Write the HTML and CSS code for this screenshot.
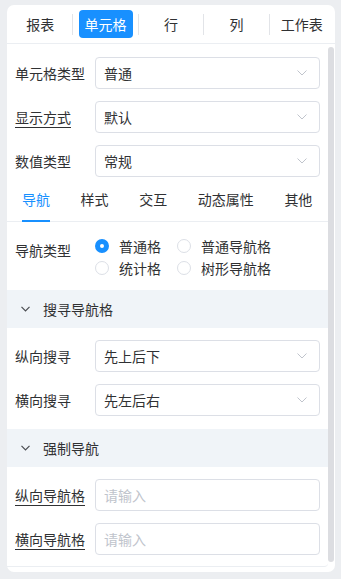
FILE: index.html
```html
<!DOCTYPE html>
<html lang="zh-CN">
<head>
    <meta charset="UTF-8">
    <meta name="viewport" content="width=device-width, initial-scale=1.0">
    <title>单元格属性</title>
    <link rel="stylesheet" href="styles.css">
</head>
<body>
    <div class="panel">
        <!-- 顶部分类 -->
        <div class="top-tabs">
            <div class="top-tab"><span>报表</span></div>
            <div class="top-tab"><span class="active">单元格</span></div>
            <div class="top-tab"><span>行</span></div>
            <div class="top-tab"><span>列</span></div>
            <div class="top-tab"><span>工作表</span></div>
        </div>

        <div class="panel-body">
            <div class="scroll">
                <div class="basic">
                    <div class="row">
                        <span class="label">单元格类型</span>
                        <div class="select">
                            <span>普通</span>
                            <svg class="arrow" width="10" height="6" viewBox="0 0 10 6"><path d="M0.5 0.5 L5 5 L9.5 0.5" /></svg>
                        </div>
                    </div>
                    <div class="row">
                        <span class="label"><u>显示方式</u></span>
                        <div class="select">
                            <span>默认</span>
                            <svg class="arrow" width="10" height="6" viewBox="0 0 10 6"><path d="M0.5 0.5 L5 5 L9.5 0.5" /></svg>
                        </div>
                    </div>
                    <div class="row">
                        <span class="label">数值类型</span>
                        <div class="select">
                            <span>常规</span>
                            <svg class="arrow" width="10" height="6" viewBox="0 0 10 6"><path d="M0.5 0.5 L5 5 L9.5 0.5" /></svg>
                        </div>
                    </div>
                </div>

                <!-- 属性分页 -->
                <div class="sub-tabs">
                    <span class="sub-tab active">导航</span>
                    <span class="sub-tab">样式</span>
                    <span class="sub-tab">交互</span>
                    <span class="sub-tab">动态属性</span>
                    <span class="sub-tab">其他</span>
                </div>

                <div class="nav-type">
                    <span class="label">导航类型</span>
                    <div class="radios">
                        <span class="radio checked"><i></i>普通格</span>
                        <span class="radio"><i></i>普通导航格</span>
                        <span class="radio"><i></i>统计格</span>
                        <span class="radio"><i></i>树形导航格</span>
                    </div>
                </div>

                <div class="section-head">
                    <svg class="fold" width="9" height="6" viewBox="0 0 9 6"><path d="M0.5 0.8 L4.5 4.8 L8.5 0.8" /></svg>
                    <span>搜寻导航格</span>
                </div>
                <div class="section">
                    <div class="row">
                        <span class="label">纵向搜寻</span>
                        <div class="select">
                            <span>先上后下</span>
                            <svg class="arrow" width="10" height="6" viewBox="0 0 10 6"><path d="M0.5 0.5 L5 5 L9.5 0.5" /></svg>
                        </div>
                    </div>
                    <div class="row">
                        <span class="label">横向搜寻</span>
                        <div class="select">
                            <span>先左后右</span>
                            <svg class="arrow" width="10" height="6" viewBox="0 0 10 6"><path d="M0.5 0.5 L5 5 L9.5 0.5" /></svg>
                        </div>
                    </div>
                </div>

                <div class="section-head">
                    <svg class="fold" width="9" height="6" viewBox="0 0 9 6"><path d="M0.5 0.8 L4.5 4.8 L8.5 0.8" /></svg>
                    <span>强制导航</span>
                </div>
                <div class="section last">
                    <div class="row">
                        <span class="label"><u>纵向导航格</u></span>
                        <input class="input" type="text" placeholder="请输入">
                    </div>
                    <div class="row">
                        <span class="label"><u>横向导航格</u></span>
                        <input class="input" type="text" placeholder="请输入">
                    </div>
                </div>
            </div>
            <div class="scrollbar"></div>
        </div>
    </div>
</body>
</html>
```

FILE: styles.css
```css
body {
    margin: 0;
    padding: 0;
    background-color: #eceef1;
    font-family: "Noto Sans CJK SC", "Noto Sans", sans-serif;
    font-size: 14px;
    color: #303133;
}

/* 面板 */
.panel {
    margin: 5px 6px 7px 7px;
    height: 562px;
    padding-bottom: 5px;
    background-color: #fff;
    border-radius: 7px;
    display: flex;
    flex-direction: column;
}

/* 顶部分类 */
.top-tabs {
    height: 38px;
    display: flex;
    align-items: center;
    padding: 0 1px;
    border-bottom: 1px solid #ebeef2;
}

.top-tab {
    flex: 1;
    height: 21px;
    display: flex;
    align-items: center;
    justify-content: center;
}

.top-tab + .top-tab {
    border-left: 1px solid #e2e4e8;
}

.top-tab span {
    line-height: 28px;
    padding: 0 5px;
    border-radius: 4px;
    white-space: nowrap;
}

.top-tab span.active {
    background-color: #1890ff;
    color: #fff;
    padding: 0 6px;
}

.panel-body {
    flex: 1;
    display: flex;
}

.scroll {
    flex: 1;
    border-bottom: 1px solid #ebeef2;
    border-bottom-right-radius: 4px;
}

.scrollbar {
    width: 6px;
    margin: 3px 1px 5px 0;
    background-color: #dcdde1;
    border-radius: 3px;
}

/* 表单行 */
.basic {
    padding: 13px 8px 0;
}

.row {
    display: flex;
    align-items: center;
    height: 32px;
}

.row + .row {
    margin-top: 12px;
}

.label {
    width: 80px;
    flex-shrink: 0;
    line-height: 32px;
    white-space: nowrap;
}

.label u {
    text-decoration-thickness: 1px;
    text-underline-offset: 4px;
}

.select,
.input {
    flex: 1;
    height: 32px;
    box-sizing: border-box;
    border: 1px solid #dcdfe6;
    border-radius: 4px;
    padding: 0 12px 0 8px;
    display: flex;
    align-items: center;
    justify-content: space-between;
    font-family: inherit;
    font-size: 14px;
    color: #303133;
    min-width: 0;
}

.input {
    outline: none;
}

.input::placeholder {
    color: #c0c4cc;
}

.arrow path {
    fill: none;
    stroke: #c0c4cc;
    stroke-width: 1;
}

/* 属性分页 */
.sub-tabs {
    display: flex;
    border-bottom: 1px solid #ebeef2;
}

.sub-tab {
    position: relative;
    padding: 0 15.3px;
    line-height: 44px;
    white-space: nowrap;
}

.sub-tab:first-child {
    padding-left: 15px;
}

.sub-tab.active {
    color: #1890ff;
}

.sub-tab.active::after {
    content: "";
    position: absolute;
    left: 15px;
    right: 15px;
    bottom: -1px;
    height: 2px;
    background-color: #1890ff;
}

/* 导航类型 */
.nav-type {
    display: flex;
    align-items: flex-start;
    padding: 12px 8px 11px;
}

.radios {
    padding-top: 1px;
    display: grid;
    grid-template-columns: 82px auto;
}

.radio {
    display: flex;
    align-items: center;
    line-height: 22px;
    white-space: nowrap;
}

.radio i {
    width: 14px;
    height: 14px;
    box-sizing: border-box;
    border: 1px solid #dcdfe6;
    border-radius: 50%;
    margin-right: 10px;
    background-color: #fff;
}

.radio.checked i {
    border: 5px solid #1890ff;
}

/* 折叠分组 */
.section-head {
    height: 38px;
    display: flex;
    align-items: center;
    padding-left: 14px;
    background-color: #f0f4f8;
}

.fold {
    margin-right: 13px;
}

.fold path {
    fill: none;
    stroke: #4a4d52;
    stroke-width: 1.2;
}

.section {
    padding: 12px 8px 13px;
}

.section.last {
    padding-bottom: 10px;
}
```
